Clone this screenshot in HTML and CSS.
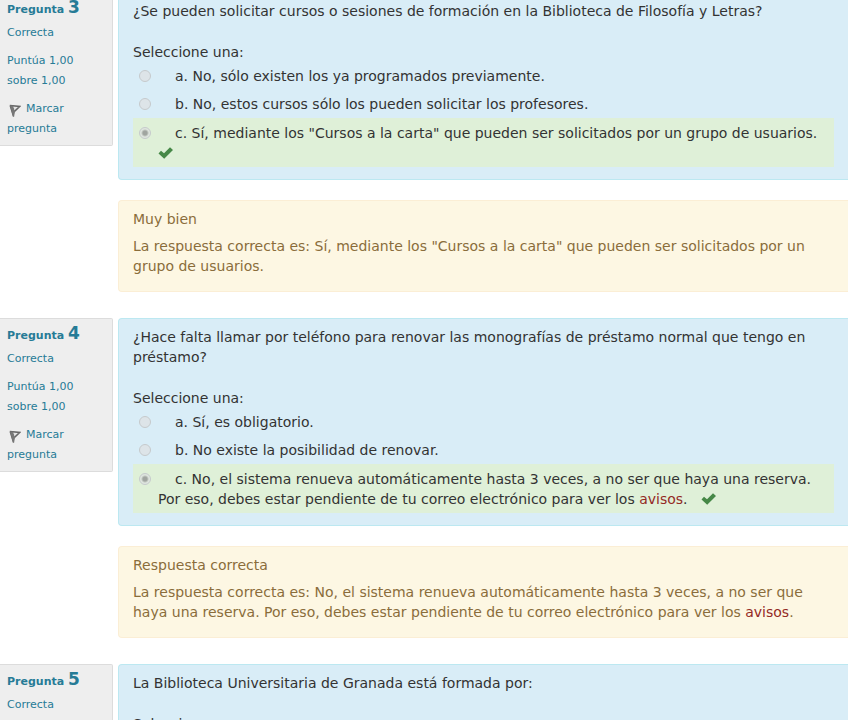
FILE: index.html
```html
<!DOCTYPE html>
<html lang="es">
<head>
    <meta charset="UTF-8">
    <title>Cuestionario</title>
    <link rel="stylesheet" href="styles.css">
</head>
<body>
    <svg class="defs" width="0" height="0">
        <symbol id="flag" viewBox="0 0 12 13">
            <path d="M0.8 1.6 L10.8 2.4 L5.2 7.6 M1.2 1.5 L4.6 12.5" fill="none" stroke="#666" stroke-width="1.5"/>
            <path d="M1 1.5 L4.2 1.8 L6 8 L5 12.5 L4 12.5 Z" fill="#777"/>
            <path d="M4.4 3.2 L8 3.4 L5.8 5.6 Z" fill="#ddd"/>
        </symbol>
        <symbol id="check" viewBox="0 0 16 12">
            <path d="M0.5 6.5 L3 3.8 L6 6.2 L12 0.3 L15 3 L6.2 11.8 Z" fill="#468847"/>
        </symbol>
    </svg>

    <div class="quiz">
        <div class="que">
            <div class="info">
                <h3>Pregunta <span class="qno">3</span></h3>
                <div class="state">Correcta</div>
                <div class="grade">Puntúa 1,00 sobre 1,00</div>
                <a href="#" class="mark"><svg class="flag"><use href="#flag"/></svg>Marcar pregunta</a>
            </div>
            <div class="content">
                <div class="formulation">
                    <div class="qtext">¿Se pueden solicitar cursos o sesiones de formación en la Biblioteca de Filosofía y Letras?</div>
                    <div class="prompt">Seleccione una:</div>
                    <div class="answer">
                        <input type="radio" name="q3" id="q3a" disabled>
                        <label for="q3a">a. No, sólo existen los ya programados previamente.</label>
                    </div>
                    <div class="answer">
                        <input type="radio" name="q3" id="q3b" disabled>
                        <label for="q3b">b. No, estos cursos sólo los pueden solicitar los profesores.</label>
                    </div>
                    <div class="answer correct">
                        <input type="radio" name="q3" id="q3c" checked disabled>
                        <label for="q3c">c. Sí, mediante los "Cursos a la carta" que pueden ser solicitados por un grupo de usuarios. <svg class="check"><use href="#check"/></svg></label>
                    </div>
                </div>
                <div class="feedback">
                    <p>Muy bien</p>
                    <p>La respuesta correcta es: Sí, mediante los "Cursos a la carta" que pueden ser solicitados por un grupo de usuarios.</p>
                </div>
            </div>
        </div>

        <div class="que">
            <div class="info">
                <h3>Pregunta <span class="qno">4</span></h3>
                <div class="state">Correcta</div>
                <div class="grade">Puntúa 1,00 sobre 1,00</div>
                <a href="#" class="mark"><svg class="flag"><use href="#flag"/></svg>Marcar pregunta</a>
            </div>
            <div class="content">
                <div class="formulation">
                    <div class="qtext">¿Hace falta llamar por teléfono para renovar las monografías de préstamo normal que tengo en préstamo?</div>
                    <div class="prompt">Seleccione una:</div>
                    <div class="answer">
                        <input type="radio" name="q4" id="q4a" disabled>
                        <label for="q4a">a. Sí, es obligatorio.</label>
                    </div>
                    <div class="answer">
                        <input type="radio" name="q4" id="q4b" disabled>
                        <label for="q4b">b. No existe la posibilidad de renovar.</label>
                    </div>
                    <div class="answer correct">
                        <input type="radio" name="q4" id="q4c" checked disabled>
                        <label for="q4c">c. No, el sistema renueva automáticamente hasta 3 veces, a no ser que haya una reserva. Por eso, debes estar pendiente de tu correo electrónico para ver los <a href="#">avisos</a>.&nbsp;&nbsp; <svg class="check"><use href="#check"/></svg></label>
                    </div>
                </div>
                <div class="feedback">
                    <p>Respuesta correcta</p>
                    <p>La respuesta correcta es: No, el sistema renueva automáticamente hasta 3 veces, a no ser que haya una reserva. Por eso, debes estar pendiente de tu correo electrónico para ver los <a href="#">avisos</a>.</p>
                </div>
            </div>
        </div>

        <div class="que">
            <div class="info">
                <h3>Pregunta <span class="qno">5</span></h3>
                <div class="state">Correcta</div>
            </div>
            <div class="content">
                <div class="formulation">
                    <div class="qtext">La Biblioteca Universitaria de Granada está formada por:</div>
                    <div class="prompt">Seleccione una:</div>
                </div>
            </div>
        </div>
    </div>
</body>
</html>
```
FILE: styles.css
```css
body {
    margin: 0;
    height: 100vh;
    overflow: hidden;
    background: #fff;
    color: #333;
    font-family: Verdana, "DejaVu Sans", sans-serif;
    font-size: 14px;
    line-height: 20px;
}
.defs {
    position: absolute;
}
.quiz {
    margin-top: -8px;
}
.que {
    display: flex;
    align-items: flex-start;
    gap: 5px;
    margin-bottom: 26px;
}

/* left column */
.info {
    box-sizing: border-box;
    width: 113px;
    flex: none;
    padding: 6px 20px 6px 7px;
    border: 1px solid #dcdcdc;
    border-left: 0;
    border-radius: 0 2px 2px 0;
    background: #eee;
    color: #267b96;
    font-size: 11px;
}
.info h3 {
    margin: 0 0 3px;
    font-size: 11px;
    line-height: 20px;
    white-space: nowrap;
}
.qno {
    font-size: 17px;
    line-height: 16px;
}
.state, .grade {
    margin-bottom: 8px;
}
.mark {
    display: block;
    color: #267b96;
    text-decoration: none;
}
.flag {
    width: 12px;
    height: 13px;
    margin: 0 5px 0 2px;
    vertical-align: -5px;
}

/* question and feedback */
.content {
    flex: 1;
    min-width: 0;
}
.formulation, .feedback {
    padding: 8px 14px 12px;
    border: 1px solid #bce8f1;
    border-right: 0;
    border-radius: 4px 0 0 4px;
    background: #d9edf7;
}
.qtext {
    margin-bottom: 21px;
}
.answer {
    display: flex;
    align-items: flex-start;
    padding: 4px 0;
}
.answer label {
    flex: 1;
    text-indent: 17px;
}
.answer input {
    appearance: none;
    box-sizing: border-box;
    flex: none;
    width: 12px;
    height: 12px;
    margin: 4px 7px 0 6px;
    border: 1px solid #c6cacc;
    border-radius: 50%;
    background: #dde4e8;
}
.answer input:checked {
    background: radial-gradient(circle, #a0a5a0 0 2px, #dfe6df 4px);
}
.correct {
    padding: 5px 0 4px;
    background: #dff0d8;
}
.answer a, .feedback a {
    color: #942a25;
    text-decoration: none;
}
.check {
    width: 16px;
    height: 12px;
    vertical-align: -1px;
}
.feedback {
    margin-top: 20px;
    padding-bottom: 15px;
    border-color: #fbeed5;
    background: #fdf7e3;
    color: #8a6d3b;
}
.feedback p {
    margin: 0 0 7px;
}
.feedback p:last-child {
    margin-bottom: 0;
}
```
